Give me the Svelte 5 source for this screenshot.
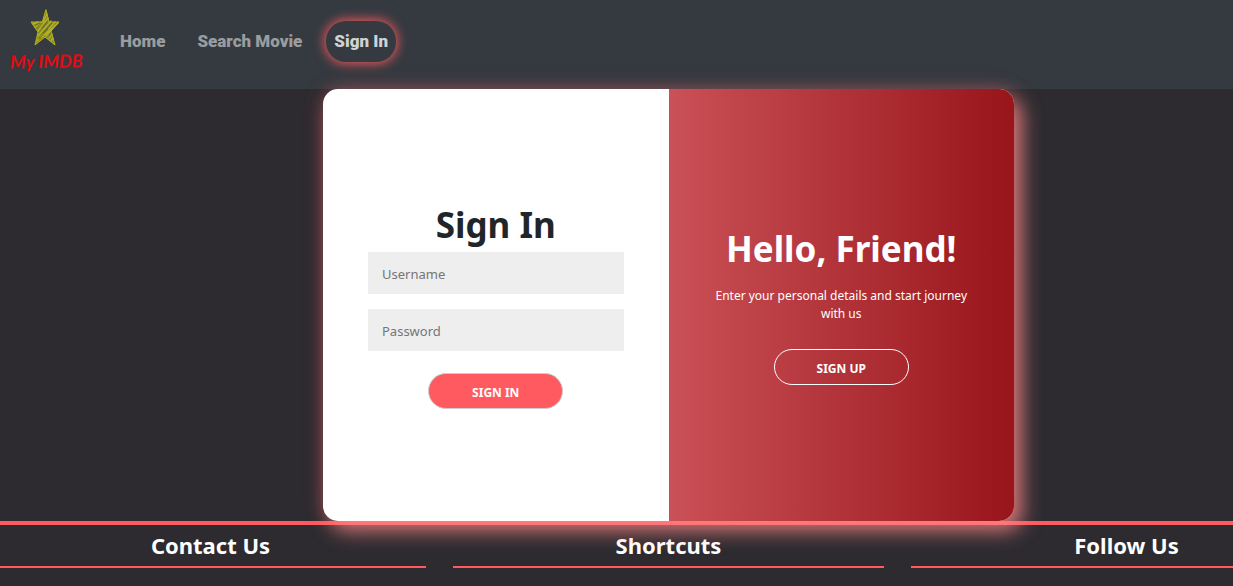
<script>
  let username = $state('');
  let password = $state('');
  const links = [
    { label: 'Home', active: false },
    { label: 'Search Movie', active: false },
    { label: 'Sign In', active: true }
  ];
  const sections = ['Contact Us', 'Shortcuts', 'Follow Us'];
</script>

<div class="page">
  <header>
    <a class="logo" href="#home" aria-label="My IMDB">
      <svg viewBox="0 0 88 80" width="88" height="80">
        <g fill="none" stroke="#b5b31d" stroke-linecap="round" stroke-linejoin="round">
          <path fill="#86862a" stroke-width="1" d="M46 8 L49 20 L59 20 L51 29 L55 43 L45 35 L35 43 L38 30 L31 20 L42 20 Z" />
          <path stroke-width="1.4" d="M43 20 L47 12 M33 22 L38 20 M35 25 L41 20 M38 29 L48 16 M38 34 L51 19 M37 39 L55 20 M42 35 L58 21 M46 34 L53 26 M49 36 L52 32 M51 39 L53 36" />
          <path stroke="#50543a" stroke-width="0.8" d="M42 26 L47 20 M43 31 L52 21 M39 37 L48 27 M36 23 L40 21 M49 34 L51 31" />
        </g>
        <text x="10" y="66" class="brand" transform="rotate(-1 45 60)">My IMDB</text>
      </svg>
    </a>
    <nav>
      {#each links as link}
        <a href="#{link.label}" class:active={link.active}>{link.label}</a>
      {/each}
    </nav>
  </header>

  <main>
    <section class="card">
      <form onsubmit={(e) => e.preventDefault()}>
        <h1>Sign In</h1>
        <input type="text" placeholder="Username" aria-label="Username" bind:value={username} />
        <input type="password" placeholder="Password" aria-label="Password" bind:value={password} />
        <button type="submit">SIGN IN</button>
      </form>
      <div class="welcome">
        <h1>Hello, Friend!</h1>
        <p>Enter your personal details and start journey with us</p>
        <button type="button" class="ghost">SIGN UP</button>
      </div>
    </section>
  </main>

  <footer>
    {#each sections as title}
      <h2>{title}</h2>
    {/each}
  </footer>
</div>

<style>
  :global(body) {
    margin: 0;
    background: #2d2b30;
    overflow: hidden;
  }
  .page {
    width: calc(100% + 104px);
    font-family: 'Noto Sans', sans-serif;
    color: #212529;
  }
  .page * {
    box-sizing: border-box;
  }
  header {
    display: flex;
    align-items: center;
    gap: 24px;
    height: 89px;
    padding-bottom: 6px;
    background: #343a40;
  }
  .logo {
    display: flex;
  }
  .brand {
    font: italic bold 18px Lato, sans-serif;
    fill: #e30b13;
  }
  nav {
    display: flex;
    gap: 16px;
  }
  nav a {
    padding: 8px;
    border-radius: 20px;
    font: 900 17px/25px Roboto, sans-serif;
    color: #9a9d9f;
    text-decoration: none;
  }
  nav a.active {
    color: #d0d2d3;
    box-shadow: 0 0 12px 1px #ff5a5f;
  }
  main {
    display: flex;
    justify-content: center;
  }
  .card {
    position: relative;
    z-index: 1;
    display: grid;
    grid-template-columns: 1fr 1fr;
    width: 691px;
    max-width: 100%;
    min-height: 432px;
    border-radius: 15px;
    background: #fff;
    box-shadow:
      8px 10px 20px rgba(255, 140, 140, 0.75),
      0 0 20px rgba(255, 90, 95, 0.3);
  }
  form,
  .welcome {
    display: flex;
    flex-direction: column;
    align-items: center;
    justify-content: center;
    padding: 0 45px;
    text-align: center;
  }
  .welcome {
    border-radius: 0 15px 15px 0;
    background: linear-gradient(to right, #ca5157, #98151a);
    color: #fff;
  }
  h1 {
    margin: 0;
    font-size: 35px;
    line-height: 46px;
    font-weight: 700;
  }
  form h1 {
    margin-bottom: 4px;
  }
  input {
    width: 100%;
    height: 42px;
    margin-bottom: 15px;
    padding: 3px 14px 0;
    border: 0;
    border-radius: 0;
    background: #eee;
    font: 13px 'Noto Sans', sans-serif;
  }
  input::placeholder {
    color: #757575;
  }
  button {
    width: 135px;
    height: 36px;
    margin-top: 7px;
    padding: 3px 0 0;
    border: 1px solid #ccc;
    border-radius: 20px;
    background: #ff5a5f;
    color: #fff;
    font: bold 12px 'Noto Sans', sans-serif;
  }
  .ghost {
    margin-top: 0;
    border-color: #fff;
    background: transparent;
  }
  p {
    margin: 15px 0 26px;
    font-size: 12px;
    line-height: 18px;
  }
  footer {
    display: grid;
    grid-template-columns: repeat(3, 1fr);
    gap: 27px;
    margin: 0 -5px;
    padding-bottom: 18px;
    border-top: 4px solid #ff5a5f;
  }
  h2 {
    margin: 0;
    padding: 6px 0 7px;
    border-bottom: 2px solid #ff5a5f;
    color: #fff;
    font-size: 22px;
    line-height: 28px;
    font-weight: 700;
    text-align: center;
  }
</style>
